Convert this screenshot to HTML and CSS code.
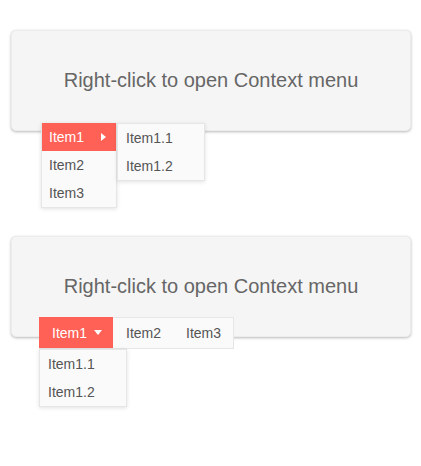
FILE: index.html
```html
<!DOCTYPE html>
<html>
<head>
<meta charset="utf-8">
<link rel="stylesheet" href="styles.css">
</head>
<body>
<div class="page">
  <section class="demo demo-vertical">
    <div class="card">Right-click to open Context menu</div>
    <ul class="menu vmenu">
      <li class="item active">
        <span>Item1</span><span class="caret-right"></span>
        <ul class="menu submenu-side">
          <li class="item">Item1.1</li>
          <li class="item">Item1.2</li>
        </ul>
      </li>
      <li class="item">Item2</li>
      <li class="item">Item3</li>
    </ul>
  </section>
  <section class="demo demo-horizontal">
    <div class="card">Right-click to open Context menu</div>
    <ul class="menu hmenu">
      <li class="hitem active">
        <span>Item1</span><span class="caret-down"></span>
        <ul class="menu submenu-down">
          <li class="item">Item1.1</li>
          <li class="item">Item1.2</li>
        </ul>
      </li>
      <li class="hitem">Item2</li>
      <li class="hitem">Item3</li>
    </ul>
  </section>
</div>
</body>
</html>
```
FILE: styles.css
```css
html, body {
  margin: 0;
  padding: 0;
  background: #ffffff;
}
body {
  font-family: "Liberation Sans", Arial, Helvetica, sans-serif;
  min-height: 466px;
}
.page {
  padding: 30px 10px 129px 11px;
  width: 400px;
}
.demo {
  position: relative;
}
.demo-vertical {
  margin-bottom: 105px;
}
.card {
  box-sizing: border-box;
  height: 101px;
  background: #f5f5f5;
  border: 1px solid #ececec;
  border-radius: 5px;
  box-shadow: 0 1px 3px rgba(0, 0, 0, 0.28);
  display: flex;
  align-items: center;
  justify-content: center;
  color: #666666;
  font-size: 20px;
}
.menu {
  list-style: none;
  margin: 0;
  padding: 0;
  background: #fafafa;
  border: 1px solid #e6e6e6;
  box-shadow: 0 1px 4px rgba(0, 0, 0, 0.12);
  font-size: 14px;
  color: #555555;
}
.item {
  height: 28px;
  line-height: 28px;
  padding: 0 8px;
  white-space: nowrap;
  position: relative;
}
.active {
  background: #ff6157;
  color: #ffffff;
}
.vmenu {
  position: absolute;
  left: 30px;
  top: 93px;
  width: 76px;
  box-sizing: border-box;
  border-top: none;
}
.vmenu > .item {
  display: flex;
  align-items: center;
  justify-content: space-between;
  padding-left: 7px;
  padding-right: 10px;
}
.caret-right {
  width: 0;
  height: 0;
  border-top: 4px solid transparent;
  border-bottom: 4px solid transparent;
  border-left: 5px solid #ffffff;
}
.submenu-side {
  position: absolute;
  left: 75px;
  top: 0;
  width: 88px;
  box-sizing: border-box;
  color: #555555;
}
.hmenu {
  position: absolute;
  left: 28px;
  top: 81px;
  display: flex;
  height: 32px;
  box-sizing: border-box;
  box-shadow: none;
}
.hitem {
  position: relative;
  display: flex;
  align-items: center;
  gap: 7px;
  padding: 0 12px 0 13px;
  height: 30px;
}
.hmenu > .active {
  margin: -1px 0 0 -1px;
  height: 31px;
  padding-left: 13px;
  padding-right: 11px;
}
.caret-down {
  width: 0;
  height: 0;
  border-left: 4px solid transparent;
  border-right: 4px solid transparent;
  border-top: 5px solid #ffffff;
}
.submenu-down {
  position: absolute;
  left: 0;
  top: 32px;
  width: 88px;
  box-sizing: border-box;
  color: #555555;
}
```
